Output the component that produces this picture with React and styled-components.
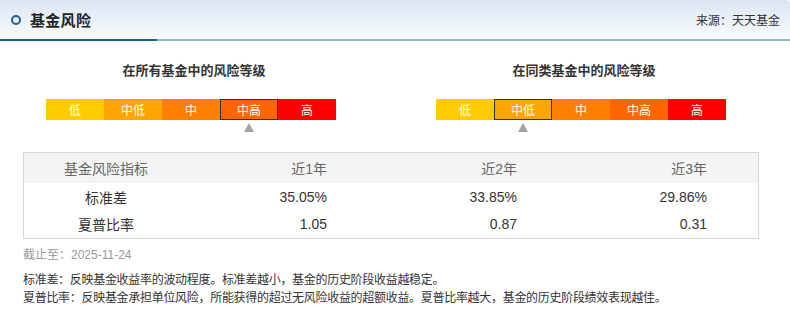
import React from 'react';
import styled, { createGlobalStyle } from 'styled-components';

const GlobalStyle = createGlobalStyle`
  body {
    margin: 0;
    background: #fff;
    font-family: "Liberation Sans", "Noto Sans CJK SC", sans-serif;
  }
`;

const Panel = styled.div`
  width: 790px;
`;

const Header = styled.div`
  height: 39px;
  display: flex;
  align-items: center;
  justify-content: space-between;
  padding: 0 10px 0 11px;
  background: linear-gradient(to bottom, #dbe6f2, #f9fbfe);
  border-bottom: 2px solid #8fb7d6;
  border-top-right-radius: 4px;
  position: relative;
  &::after {
    content: '';
    position: absolute;
    left: 0;
    bottom: -2px;
    width: 157px;
    height: 2px;
    background: #1d6289;
  }
`;

const TitleWrap = styled.div`
  display: flex;
  align-items: center;
  gap: 9px;
`;

const Ring = styled.span`
  width: 6px;
  height: 6px;
  border: 2px solid #1f5f8f;
  border-radius: 50%;
`;

const Title = styled.span`
  font-size: 15px;
  color: #222;
  font-weight: 600;
  letter-spacing: 0.3px;
`;

const Source = styled.span`
  font-size: 12px;
  color: #333;
`;

const Levels = styled.div`
  display: grid;
  grid-template-columns: 390px 390px;
  padding-top: 21px;
`;

const LevelBlock = styled.div`
  padding-left: 46px;
`;

const LevelTitle = styled.div`
  width: 296px;
  text-align: center;
  font-size: 13px;
  font-weight: bold;
  color: #333;
  line-height: 18px;
`;

const Bar = styled.div`
  display: flex;
  margin-top: 19px;
  width: 290px;
`;

const Segment = styled.div`
  position: relative;
  width: 58px;
  height: 21px;
  box-sizing: border-box;
  background: ${({ $color }) => $color};
  border: ${({ $active }) => ($active ? '1px solid #333' : 'none')};
  color: #fff;
  font-size: 12px;
  display: flex;
  align-items: center;
  justify-content: center;
  ${({ $active }) => $active && `
    &::after {
      content: '';
      position: absolute;
      top: 23px;
      left: 50%;
      margin-left: -5px;
      border-left: 5px solid transparent;
      border-right: 5px solid transparent;
      border-bottom: 9px solid #a3a3a3;
    }
  `}
`;

const Table = styled.table`
  margin: 32px 0 0 23px;
  width: 734px;
  border-collapse: collapse;
  border: 1px solid #d6d6d6;
  font-size: 14px;
  color: #333;
  table-layout: fixed;
`;

const HeadRow = styled.tr`
  background: #f4f4f4;
  color: #666;
  height: 30px;
`;

const Row = styled.tr`
  height: 28px;
`;

const Cell = styled.td`
  padding: 0 ${({ $first }) => ($first ? '0' : '51px')} 0 0;
  text-align: ${({ $first }) => ($first ? 'center' : 'right')};
  width: ${({ $first }) => ($first ? '164px' : '139px')};
`;

const DateLine = styled.div`
  margin: 7px 0 0 23px;
  font-size: 12px;
  color: #999;
  line-height: 18px;
`;

const Notes = styled.div`
  margin: 7px 0 0 23px;
  font-size: 12px;
  color: #333;
  line-height: 18px;
  letter-spacing: -0.3px;
`;

const levelNames = ['低', '中低', '中', '中高', '高'];
const levelColors = ['#ffcc00', '#ffa500', '#ff7f00', '#ff6600', '#ff0000'];

const RiskLevel = ({ title, active }) => (
  <LevelBlock>
    <LevelTitle>{title}</LevelTitle>
    <Bar>
      {levelNames.map((name, i) => (
        <Segment key={name} $color={levelColors[i]} $active={i === active}>
          {name}
        </Segment>
      ))}
    </Bar>
  </LevelBlock>
);

const rows = [
  ['标准差', '35.05%', '33.85%', '29.86%'],
  ['夏普比率', '1.05', '0.87', '0.31'],
];

export default function App() {
  return (
    <Panel>
      <GlobalStyle />
      <Header>
        <TitleWrap>
          <Ring />
          <Title>基金风险</Title>
        </TitleWrap>
        <Source>来源：天天基金</Source>
      </Header>
      <Levels>
        <RiskLevel title="在所有基金中的风险等级" active={3} />
        <RiskLevel title="在同类基金中的风险等级" active={1} />
      </Levels>
      <Table>
        <tbody>
          <HeadRow>
            <Cell $first>基金风险指标</Cell>
            <Cell>近1年</Cell>
            <Cell>近2年</Cell>
            <Cell>近3年</Cell>
          </HeadRow>
          {rows.map(r => (
            <Row key={r[0]}>
              {r.map((v, i) => (
                <Cell key={i} $first={i === 0}>{v}</Cell>
              ))}
            </Row>
          ))}
        </tbody>
      </Table>
      <DateLine>截止至：2025-11-24</DateLine>
      <Notes>
        标准差：反映基金收益率的波动程度。标准差越小，基金的历史阶段收益越稳定。
        <br />
        夏普比率：反映基金承担单位风险，所能获得的超过无风险收益的超额收益。夏普比率越大，基金的历史阶段绩效表现越佳。
      </Notes>
    </Panel>
  );
}
